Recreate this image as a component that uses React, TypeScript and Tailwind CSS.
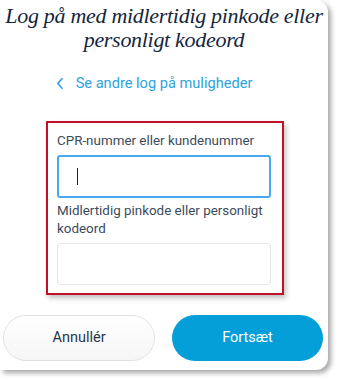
import React from "react";

export default function App() {
  return (
    <div className="w-[338px] h-[380px] bg-white overflow-hidden" style={{ fontFamily: "Roboto, 'Open Sans', sans-serif" }}>
      <div className="w-[328px] h-[370px] bg-white rounded-r-[12px] shadow-[3px_3px_5px_rgba(0,0,0,0.35)] flex flex-col">
        <h1
          className="mt-[4px] text-center text-[22px] leading-[24px] italic text-[#14263d] tracking-[-0.3px]"
          style={{ fontFamily: "'Liberation Serif', serif" }}
        >
          Log på med midlertidig pinkode eller
          <br />
          personligt kodeord
        </h1>
        <div className="mt-[21px] flex items-center justify-center gap-[12px] text-[14.6px] text-[#2ea3dc] pr-[20px]">
          <svg width="8" height="13" viewBox="0 0 8 13" fill="none">
            <path d="M6.5 1.2 L1.8 6.5 L6.5 11.8" stroke="#2ea3dc" strokeWidth="1.6" />
          </svg>
          <span>Se andre log på muligheder</span>
        </div>
        <div className="mt-[26px] ml-[46px] w-[238px] h-[174px] border-2 border-[#c0102a] shadow-[2px_3px_5px_rgba(0,0,0,0.25)] pl-[9px] pr-[11px] pt-[9px] text-[#3b4b5c]">
          <label className="block text-[13.4px] leading-[18px]">CPR-nummer eller kundenummer</label>
          <div className="mt-[5px] w-[214px] h-[43px] border-2 border-[#4aa8f0] rounded-[3px] flex items-center pl-[18px]">
            <div className="w-[1px] h-[17px] bg-[#222]" />
          </div>
          <label className="block mt-[4px] text-[13.4px] leading-[18px]">
            Midlertidig pinkode eller personligt
            <br />
            kodeord
          </label>
          <div className="mt-[5px] w-[214px] h-[42px] border border-[#e6e6e6] rounded-[3px]" />
        </div>
        <div className="mt-[20px] flex pl-[3px] gap-[17px]">
          <button className="w-[152px] h-[46px] rounded-full border border-[#e2e2e2] bg-gradient-to-b from-white to-[#f6f6f6] text-[14.5px] text-[#24374c]">
            Annullér
          </button>
          <button className="w-[151px] h-[46px] rounded-full bg-[#049fd9] text-[14.5px] text-white">
            Fortsæt
          </button>
        </div>
      </div>
    </div>
  );
}
